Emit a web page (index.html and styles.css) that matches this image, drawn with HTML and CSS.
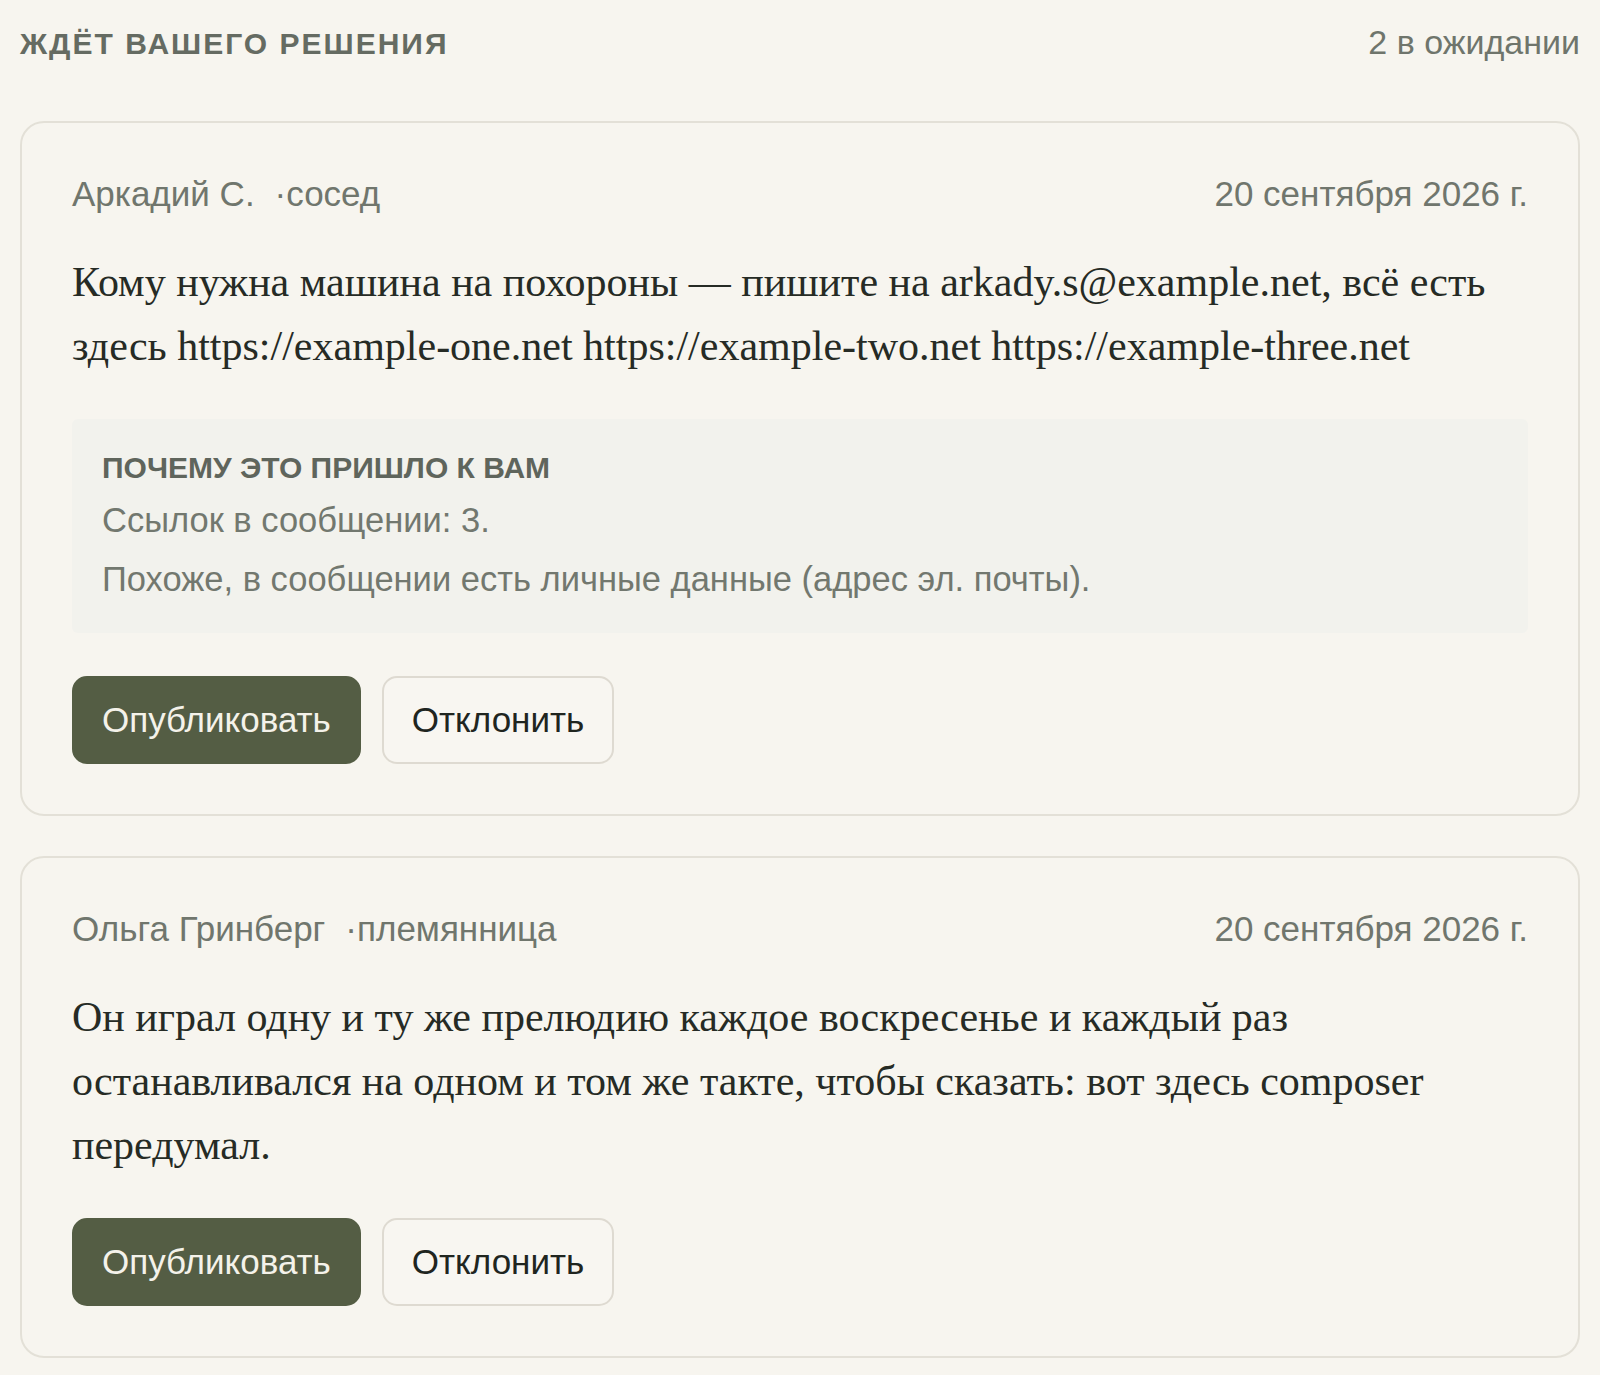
FILE: index.html
```html
<!DOCTYPE html>
<html lang="ru">
<head>
<meta charset="utf-8">
<title>Ждёт вашего решения</title>
<link rel="stylesheet" href="styles.css">
</head>
<body>
<main class="queue">
  <header class="queue-head">
    <h2 class="queue-title">Ждёт вашего решения</h2>
    <span class="queue-count">2 в ожидании</span>
  </header>
  <ul class="cards">
    <li class="card">
      <div class="card-meta">
        <span class="author">Аркадий С.</span>
        <span class="role">·сосед</span>
        <time class="date">20 сентября 2026 г.</time>
      </div>
      <p class="card-text">Кому нужна машина на похороны — пишите на arkady.s@example.net, всё есть здесь https://example-one.net https://example-two.net https://example-three.net</p>
      <section class="reason">
        <h3 class="reason-title">Почему это пришло к вам</h3>
        <p class="reason-line">Ссылок в сообщении: 3.</p>
        <p class="reason-line">Похоже, в сообщении есть личные данные (адрес эл. почты).</p>
      </section>
      <div class="actions">
        <button class="btn btn-primary" type="button">Опубликовать</button>
        <button class="btn btn-secondary" type="button">Отклонить</button>
      </div>
    </li>
    <li class="card">
      <div class="card-meta">
        <span class="author">Ольга Гринберг</span>
        <span class="role">·племянница</span>
        <time class="date">20 сентября 2026 г.</time>
      </div>
      <p class="card-text">Он играл одну и ту же прелюдию каждое воскресенье и каждый раз останавливался на одном и том же такте, чтобы сказать: вот здесь composer передумал.</p>
      <div class="actions">
        <button class="btn btn-primary" type="button">Опубликовать</button>
        <button class="btn btn-secondary" type="button">Отклонить</button>
      </div>
    </li>
  </ul>
</main>
</body>
</html>
```
FILE: styles.css
```css
* { box-sizing: border-box; }

html, body {
  margin: 0;
  padding: 0;
  background: #f7f5ef;
}

body {
  font-family: "Liberation Sans", Arial, sans-serif;
  color: #262b25;
}

.queue {
  padding: 19px 20px 16px;
}

.queue-head {
  display: flex;
  align-items: baseline;
  justify-content: space-between;
  margin-bottom: 54px;
}

.queue-title {
  margin: 0;
  font-size: 30px;
  line-height: 42px;
  font-weight: 700;
  text-transform: uppercase;
  letter-spacing: 2px;
  color: #656b62;
}

.queue-count {
  font-size: 34px;
  line-height: 1.4;
  color: #6f756c;
}

.cards {
  list-style: none;
  margin: 0;
  padding: 0;
  display: flex;
  flex-direction: column;
  gap: 40px;
}

.card {
  border: 2px solid #e3e0d7;
  border-radius: 24px;
  padding: 50px;
}

.card-meta {
  display: flex;
  align-items: baseline;
  font-size: 35px;
  line-height: 42px;
  color: #70766d;
}

.role {
  margin-left: 20px;
}

.date {
  margin-left: auto;
}

.card-text {
  margin: 35px 0 41px;
  font-family: "Liberation Serif", "Times New Roman", serif;
  font-size: 42px;
  line-height: 64px;
  color: #262b25;
}

.reason {
  background: #f2f2ed;
  border-radius: 6px;
  padding: 28px 30px;
  margin: 0 0 43px;
}

.reason-title {
  margin: 0 0 6px;
  font-size: 30px;
  line-height: 42px;
  font-weight: 700;
  text-transform: uppercase;
  color: #5f655c;
}

.reason-line {
  margin: 0;
  font-size: 34.5px;
  line-height: 51px;
  color: #72786f;
}

.reason-line + .reason-line {
  margin-top: 8px;
}

.actions {
  display: flex;
  gap: 21px;
}

.btn {
  font-family: "Liberation Sans", Arial, sans-serif;
  font-size: 35px;
  line-height: 42px;
  padding: 21px 28px;
  border-radius: 15px;
  border: 2px solid transparent;
  cursor: pointer;
}

.btn-primary {
  background: #545d44;
  border-color: #545d44;
  color: #f4f2ea;
}

.btn-secondary {
  background: #f8f6f1;
  border-color: #dedad1;
  color: #20251f;
}
```
